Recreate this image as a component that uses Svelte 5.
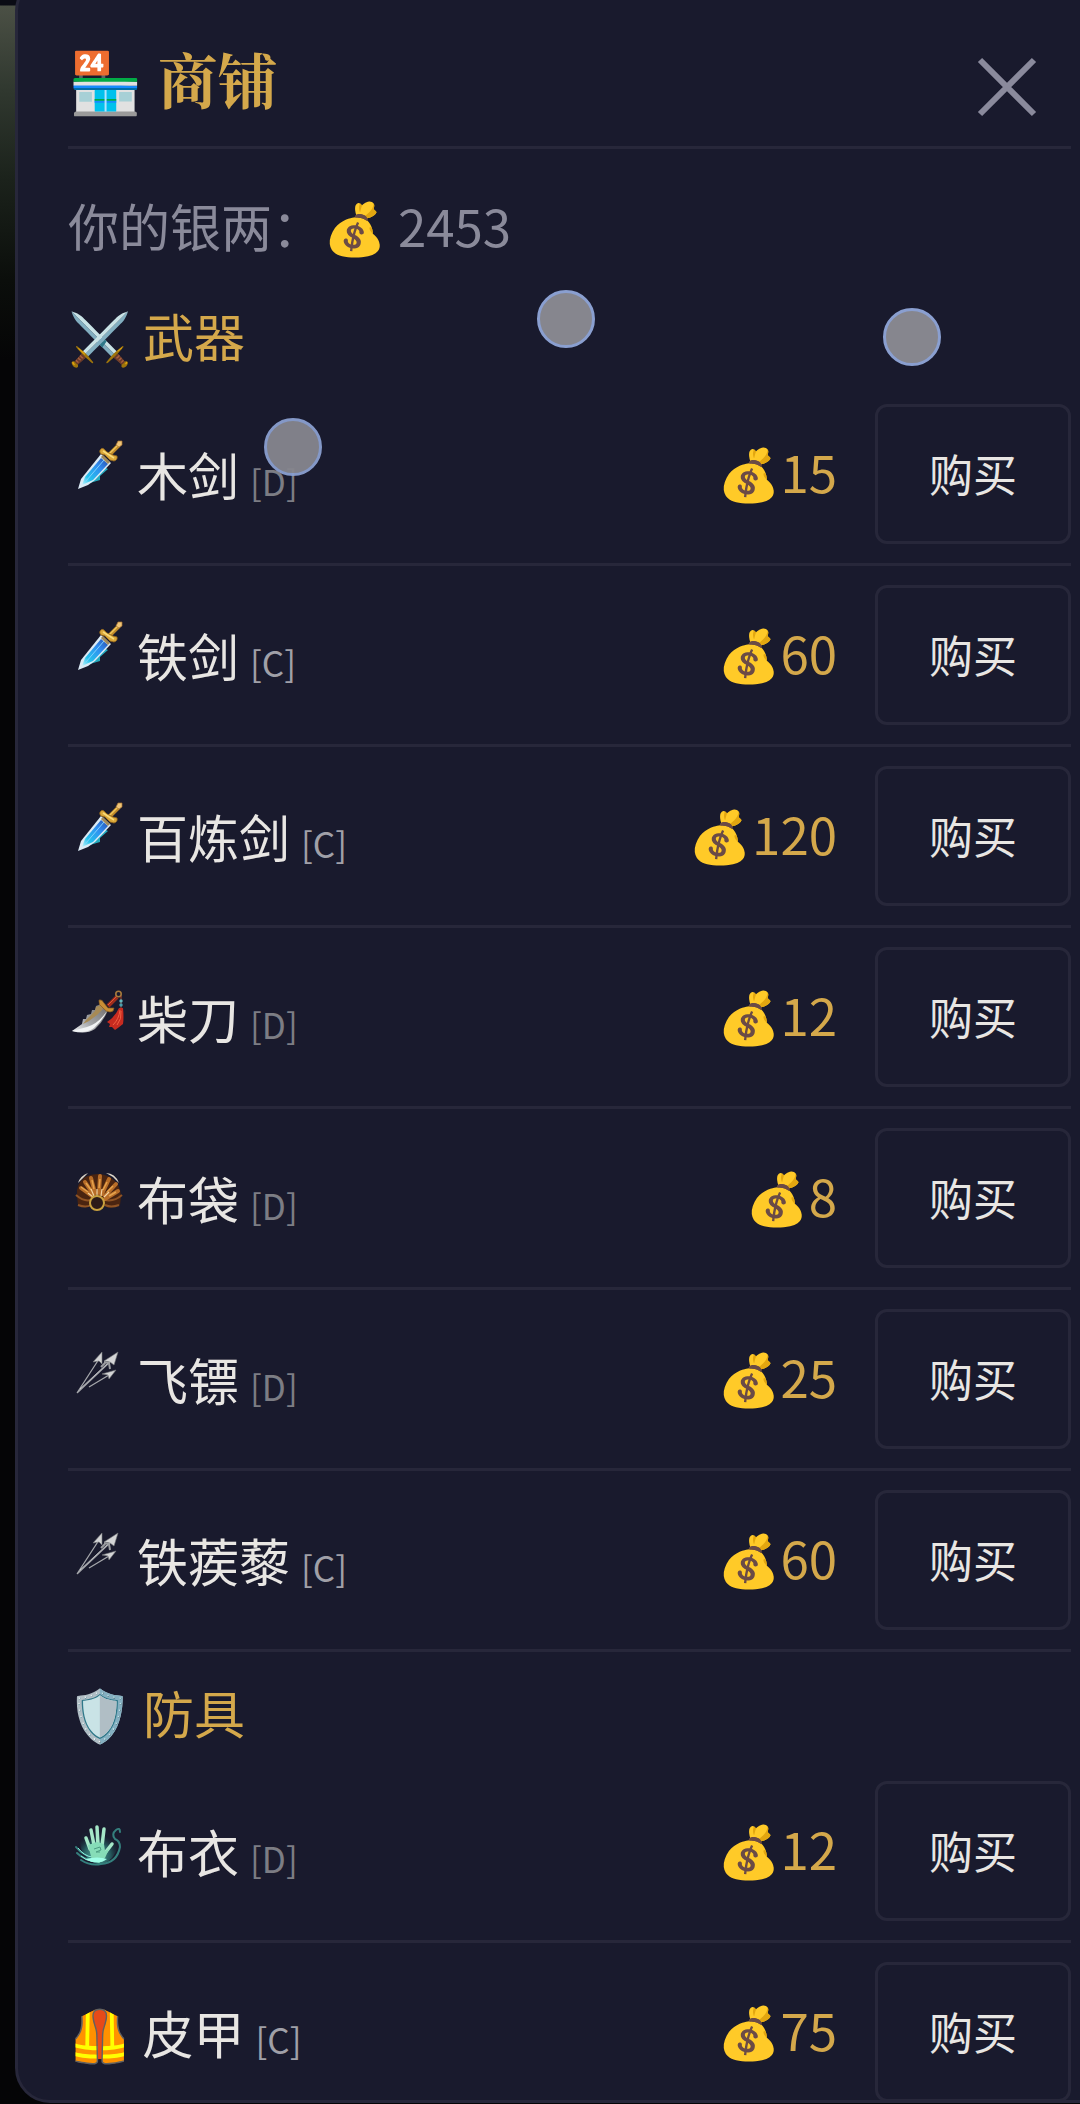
<script>
  const silver = 2453;

  const sections = [
    {
      emoji: '⚔️',
      title: '武器',
      items: [
        { icon: 'sword', name: '木剑', grade: 'D', price: 15 },
        { icon: 'sword', name: '铁剑', grade: 'C', price: 60 },
        { icon: 'sword', name: '百炼剑', grade: 'C', price: 120 },
        { icon: 'saber', name: '柴刀', grade: 'D', price: 12 },
        { icon: 'claw', name: '布袋', grade: 'D', price: 8 },
        { icon: 'darts', name: '飞镖', grade: 'D', price: 25 },
        { icon: 'darts', name: '铁蒺藜', grade: 'C', price: 60 }
      ]
    },
    {
      emoji: '🛡️',
      title: '防具',
      items: [
        { icon: 'palm', name: '布衣', grade: 'D', price: 12 },
        { emoji: '🦺', name: '皮甲', grade: 'C', price: 75 }
      ]
    }
  ];

  const touches = ['first', 'second', 'third'];
</script>

{#snippet itemIcon(kind)}
  <svg class="icon" viewBox="0 0 58 58" aria-hidden="true">
    {#if kind === 'sword'}
      <defs>
        <linearGradient id="blade" x1="1" y1="0" x2="0" y2="1">
          <stop offset="0" stop-color="#2a4fae" />
          <stop offset=".35" stop-color="#2f8df0" />
          <stop offset=".75" stop-color="#25c3ec" />
          <stop offset="1" stop-color="#c8f6ff" />
        </linearGradient>
      </defs>
      <path d="M30 26 40 31 32 38 32 42 22 45Z" fill="#22a9bd" />
      <path d="M33 16 43 25 27 42 20 47 10 51 13 41Z" fill="#dcebf5" />
      <path d="M33 20 40 26 25 42 14 47 17 39Z" fill="url(#blade)" />
      <path d="M36 22 18 43" stroke="#7fd0ff" stroke-width="1" />
      <path d="M34 18 41 25" stroke="#a08a5c" stroke-width="3" />
      <path d="M41 17 51 7" stroke="#c08a2a" stroke-width="4" />
      <path d="M41 16 51 6" stroke="#efc65a" stroke-width="1.5" />
      <path d="M33 16q-2-2-1-4 2-3 4-1l3 3 6 3 4 1q1 4-3 5l-4-1-5-5z" fill="#dba83a" stroke="#94661b" stroke-width=".8" />
      <path d="M35 13 46 20" stroke="#f8da79" stroke-width="1.500" />
      <path d="m50 3 4 0 0 4-3 2-3-2z" fill="#f0c679" stroke="#a87331" stroke-width=".7" />
    {:else if kind === 'saber'}
      <defs>
        <linearGradient id="steel" x1="1" y1="0" x2="0" y2="1">
          <stop offset="0" stop-color="#6c6a68" />
          <stop offset=".6" stop-color="#a4a6aa" />
          <stop offset="1" stop-color="#f4f6f8" />
        </linearGradient>
      </defs>
      <path d="M33 23 28 25 27 29 24 29 23 33 19 34 18 38 15 38 14 43 4 50Q18 54 27 48 36 40 40 29Z" fill="url(#steel)" />
      <path d="M33 24 28 26 27 30 23 34 18 39 15 43 21 40 29 34 35 28Z" fill="#a78a55" />
      <path d="M4 50Q18 53 26 47 35 39 39 30 30 43 19 46Z" fill="#f1f3f5" />
      <path d="m40 25 9-9" stroke="#9d2c1c" stroke-width="4" />
      <path d="m40 24 8-8" stroke="#df5838" stroke-width="1" />
      <path d="M31 19q3-1 5 3l4 5 6 0q0 4-4 4-4 0-7-4-5-3-4-8z" fill="#c98f35" stroke="#805620" stroke-width=".7" />
      <circle cx="50.500" cy="13" r="2.700" fill="none" stroke="#a87b3c" stroke-width="1.600" />
      <path d="M53 15v12" stroke="#a8482f" stroke-width="1" />
      <circle cx="53" cy="20" r="1.700" fill="#65b9c0" />
      <circle cx="53" cy="24" r="1.700" fill="#4a9fae" />
      <path d="M51 27h4q1 10 0 16-5 4-8 6l-3-3-3 0 1-3-3-2q8-5 12-14z" fill="#c72b20" />
      <path d="M52 29q-1 9-7 15M53 30q1 8-4 14" fill="none" stroke="#f16043" stroke-width="1" />
    {:else if kind === 'claw'}
      <path d="M9 33Q8 22 17 15q13-6 25 0 11 7 11 20l-1 8q-10 5-15 1l-16 0Q16 47 10 43Z" fill="#4a2410" />
      <path d="M8 33q8 7 15 5M54 33q-8 7-17 5M10 43q8 3 13 0M51 43q-8 3-14 0" fill="none" stroke="#8f5324" stroke-width="2" />
      <path d="M24 34 13 26M25 32 17 20M27 31 23 16M31 31l1-17M34 32l7-15M37 34l11-12M37 37l13-8" stroke="#b86d28" stroke-width="4" stroke-linecap="round" />
      <path d="M20 30 13 25M23 28 18 21M26 27 24 18M31 26l1-9M35 28l4-8M39 30l6-6M41 34l7-4" stroke="#e5a24c" stroke-width="1.500" />
      <path d="M25 35 20 31M26 34 23 27M29 34V27M33 34l1-7M36 35l5-5" stroke="#f3d3a0" stroke-width="1.200" />
      <path d="M10 21Q12 14 20 11L14 17ZM38 11Q47 11 51 21L45 15Z" fill="#ddd5c7" />
      <circle cx="29" cy="41" r="7" fill="#2c1a18" stroke="#c9a13f" stroke-width="2" />
    {:else if kind === 'darts'}
      <g fill="none" stroke="#a5a7ab" stroke-width="1.300">
        <path d="M9 50 31 16M9 50 44 17M21 44 41 32" />
      </g>
      <path d="M12 46 42 18" stroke="#e5e5e5" stroke-width=".7" />
      <g fill="#d3d4d5" stroke="#737579" stroke-width=".6">
        <path d="M34 9 34 21 31 18 25 19Z" />
        <path d="M50 9 46 22 42 19 36 18Z" />
        <path d="M48 27 41 36 40 32 34 31Z" />
      </g>
      <path d="M36 19l5 1 1 6M33 24l4-4" fill="none" stroke="#9b9da0" stroke-width="2" />
    {:else}
      <defs>
        <radialGradient id="glow" cx=".45" cy=".75" r=".6">
          <stop offset="0" stop-color="#6ff0d0" />
          <stop offset=".6" stop-color="#2b7773" />
          <stop offset="1" stop-color="#17343d" stop-opacity=".2" />
        </radialGradient>
      </defs>
      <path d="M15 18q-6 10 0 20l7 8q12 7 22-3 9-12 3-20L35 14Z" fill="url(#glow)" opacity=".7" />
      <path d="M8 32q7 9 18 10M9 38q8 8 20 7M13 45q9 6 20 4 16-1 19-17 0-6-5-8-4-5 1-9 4-3 4 2" fill="none" stroke="#347f7d" stroke-width="2" stroke-linecap="round" />
      <path d="M10 33q6 8 14 9M13 41q10 9 23 3" fill="none" stroke="#92f3df" stroke-width="1" />
      <path d="M22 34 18 23M26 30 23 15M30 30 29 12M34 31 36 14M37 38l7-9" stroke="#a5e8c8" stroke-width="3.500" stroke-linecap="round" />
      <path d="M20 30 29 27 36 29 37 36 41 34 37 43 31 48 24 45Z" fill="#86ddb8" />
      <path d="m26 34 6-2 1 3-5 2 4 0" fill="none" stroke="#4c9d82" stroke-width="1" />
      <path d="M17 44q13-3 22 0-9 7-22 0z" fill="#a0ffe8" />
    {/if}
  </svg>
{/snippet}

<div class="screen">
  <main class="panel">
    <header>
      <h1>🏪 商铺</h1>
      <button class="close" type="button" aria-label="关闭">
        <svg viewBox="0 0 60 60" aria-hidden="true"><path d="M3 3 57 57M57 3 3 57" /></svg>
      </button>
    </header>

    <p class="balance">你的银两：💰 {silver}</p>

    {#each sections as section}
      <section>
        <h2>{section.emoji} {section.title}</h2>
        <ul>
          {#each section.items as item}
            <li>
              <span class="name">
                {#if item.emoji}<span>{item.emoji}</span>{:else}{@render itemIcon(item.icon)}{/if}
                <span>{item.name}</span>
                <small class:common={item.grade === 'D'}>[{item.grade}]</small>
              </span>
              <span class="price">💰{item.price}</span>
              <button class="buy" type="button" aria-label={`购买${item.name}`}>购买</button>
            </li>
          {/each}
        </ul>
      </section>
    {/each}
  </main>

  {#each touches as touch}
    <span class="touch {touch}"></span>
  {/each}
</div>

<style>
  :global(body) {
    margin: 0;
    background: #050507;
  }

  .screen {
    position: relative;
    box-sizing: border-box;
    height: 100vh;
    padding-left: 15px;
    overflow: hidden;
    background: linear-gradient(#0a0b14 0 5px, #4b5045 6px, #30382f 90px, #1b221b 180px, #0b0e0b 280px, #050506 360px);
    color: #e8e6e3;
    font-family: "Noto Sans CJK SC", "Noto Color Emoji", sans-serif;
    font-size: 51px;
  }

  .panel {
    box-sizing: border-box;
    height: calc(100% + 23px);
    margin: -24px -44px 0 0;
    padding: 63px 50px 0;
    overflow: hidden;
    border: 3px solid #27273a;
    border-radius: 35px;
    background: #191a2d;
  }

  header {
    display: flex;
    align-items: flex-end;
    justify-content: space-between;
    padding-bottom: 29px;
    border-bottom: 3px solid #27273a;
  }

  h1,
  h2,
  p,
  ul {
    margin: 0;
    padding: 0;
  }

  h1 {
    padding-bottom: 3px;
    color: #d4a84b;
    font: bold 60px/72px "Noto Serif CJK SC", "Noto Color Emoji", serif;
  }

  button {
    border: 0;
    background: none;
    color: inherit;
    font-family: inherit;
  }

  .close {
    padding: 0 34px 0 0;
  }

  .close svg {
    display: block;
    width: 60px;
    height: 60px;
    fill: none;
    stroke: #8a8a9c;
    stroke-width: 6px;
  }

  .balance {
    margin: 38px 0 30px;
    color: #8a8a9a;
    font-size: 51px;
    line-height: 76px;
  }

  h2 {
    padding: 6px 0 14px;
    color: #d4a84b;
    font-size: 51px;
    font-weight: 400;
    line-height: 72px;
  }

  section + section h2 {
    padding-top: 24px;
  }

  ul {
    list-style: none;
  }

  li {
    display: flex;
    align-items: center;
    padding: 19px 0;
    border-bottom: 3px solid #27273a;
  }

  .name {
    display: flex;
    flex: 1;
    align-items: baseline;
    gap: 11px;
    padding-top: 6px;
    line-height: 72px;
  }

  .icon {
    width: 58px;
    height: 58px;
    fill: none;
  }

  small {
    color: #a0a0a8;
    font-size: 35px;
  }

  small.common {
    color: #7c7d84;
  }

  .price {
    margin-right: 38px;
    padding-bottom: 6px;
    color: #d4a84b;
    line-height: 72px;
  }

  .buy {
    box-sizing: border-box;
    padding: 32px 51px 34px;
    border: 3px solid #27273a;
    border-radius: 12px;
    font-size: 44px;
    line-height: 68px;
  }

  .touch {
    position: absolute;
    box-sizing: border-box;
    width: 58px;
    height: 58px;
    border: 3px solid #8a9fd0;
    border-radius: 50%;
    background: #86868e;
    pointer-events: none;
  }

  .first {
    top: 290px;
    left: 537px;
  }

  .second {
    top: 308px;
    left: 883px;
  }

  .third {
    top: 418px;
    left: 264px;
    opacity: 0.95;
  }
</style>
